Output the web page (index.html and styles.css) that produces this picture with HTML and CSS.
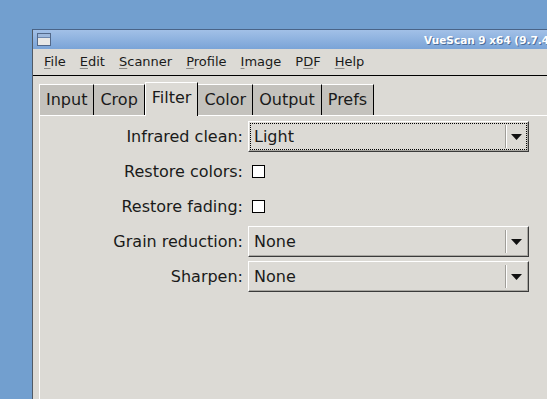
FILE: index.html
```html
<!DOCTYPE html>
<html lang="en">
<head>
<meta charset="UTF-8">
<meta name="viewport" content="width=device-width, initial-scale=1.0">
<title>VueScan</title>
<link rel="stylesheet" href="styles.css">
</head>
<body>
    <div class="window">
        <div class="titlebar">
            <svg class="win-icon" width="14" height="13" viewBox="0 0 14 13">
                <rect x="0.5" y="0.5" width="13" height="12" fill="#e8e8e6" stroke="#53698a"/>
                <rect x="1" y="1" width="12" height="3" fill="#9db8dc"/>
                <line x1="1" y1="4.5" x2="13" y2="4.5" stroke="#6d87ad"/>
            </svg>
            <span class="title">VueScan 9 x64 (9.7.48)</span>
        </div>

        <div class="menubar">
            <span class="menu-item"><u>F</u>ile</span>
            <span class="menu-item"><u>E</u>dit</span>
            <span class="menu-item"><u>S</u>canner</span>
            <span class="menu-item"><u>P</u>rofile</span>
            <span class="menu-item"><u>I</u>mage</span>
            <span class="menu-item">P<u>D</u>F</span>
            <span class="menu-item"><u>H</u>elp</span>
        </div>

        <div class="tabs">
            <div class="tab first">Input</div>
            <div class="tab">Crop</div>
            <div class="tab active">Filter</div>
            <div class="tab">Color</div>
            <div class="tab">Output</div>
            <div class="tab">Prefs</div>
        </div>

        <div class="panel">
            <div class="form">
                <div class="field-label">Infrared clean:</div>
                <div class="combo focused">
                    <div class="combo-inner">
                        <span class="combo-text">Light</span>
                        <span class="combo-sep"></span>
                        <span class="combo-arrow"><svg width="11" height="6" viewBox="0 0 11 6"><polygon points="0,0 11,0 5.5,6" fill="#111"/></svg></span>
                    </div>
                </div>

                <div class="field-label">Restore colors:</div>
                <div class="check-cell"><span class="checkbox"></span></div>

                <div class="field-label">Restore fading:</div>
                <div class="check-cell"><span class="checkbox"></span></div>

                <div class="field-label">Grain reduction:</div>
                <div class="combo">
                    <div class="combo-inner">
                        <span class="combo-text">None</span>
                        <span class="combo-sep"></span>
                        <span class="combo-arrow"><svg width="11" height="6" viewBox="0 0 11 6"><polygon points="0,0 11,0 5.5,6" fill="#111"/></svg></span>
                    </div>
                </div>

                <div class="field-label">Sharpen:</div>
                <div class="combo">
                    <div class="combo-inner">
                        <span class="combo-text">None</span>
                        <span class="combo-sep"></span>
                        <span class="combo-arrow"><svg width="11" height="6" viewBox="0 0 11 6"><polygon points="0,0 11,0 5.5,6" fill="#111"/></svg></span>
                    </div>
                </div>
            </div>
        </div>
    </div>
</body>
</html>
```

FILE: styles.css
```css
body {
    margin: 0;
    padding: 0;
    height: 399px;
    overflow: hidden;
    background-color: #729fcf;
    font-family: "DejaVu Sans", sans-serif;
    color: #1a1a1a;
}

/* window runs to the right and bottom edge of the screen */
.window {
    margin: 29px 0 0 32px;
    width: 514px;
    height: 369px;
    overflow: hidden;
    border-left: 1px solid #505a66;
    border-top: 1px solid #4a6488;
    background-color: #dcdad5;
    display: flex;
    flex-direction: column;
}

/* title bar */
.titlebar {
    height: 19px;
    display: flex;
    align-items: center;
    overflow: hidden;
    background: linear-gradient(#a2c0e7, #7aa4d7);
}

.win-icon {
    margin-left: 4px;
    flex: none;
}

.title {
    margin-left: 373px;
    font-size: 10.5px;
    font-weight: bold;
    color: #fff;
    white-space: nowrap;
    text-shadow: 1px 1px 0 #4c6d99;
}

/* menu */
.menubar {
    height: 26px;
    line-height: 26px;
    padding-left: 4px;
    display: flex;
    font-size: 13px;
    border-bottom: 1px solid #000;
}

.menu-item {
    padding: 0 7px;
}

.menu-item u {
    text-decoration-color: #8c8a86;
    text-underline-offset: 2px;
}

/* tabs */
.tabs {
    height: 39px;
    padding-left: 6px;
    display: flex;
    align-items: flex-end;
    font-size: 16px;
}

.tab {
    height: 30px;
    line-height: 30px;
    padding: 0 6px;
    background-color: #c4c2bd;
    border-top: 1px solid #fff;
    border-right: 1px solid #000;
}

.tab.first {
    border-left: 1px solid #fff;
}

.tab.active {
    position: relative; /* covers the panel's top line */
    height: 31px;
    line-height: 29px;
    padding-bottom: 2px;
    margin-bottom: -1px;
    background-color: #dcdad5;
    border-left: 1px solid #fff;
}

/* page */
.panel {
    flex: 1;
    margin-left: 6px;
    border-top: 1px solid #fff;
    border-left: 1px solid #fff;
}

.form {
    display: grid;
    grid-template-columns: 203px 281px;
    grid-auto-rows: 31px;
    column-gap: 5px;
    row-gap: 4px;
    align-items: center;
    padding-top: 5px;
    font-size: 16px;
}

.field-label {
    text-align: right;
    white-space: nowrap;
}

.check-cell {
    display: flex;
    align-items: center;
}

.checkbox {
    width: 11px;
    height: 11px;
    margin-left: 4px;
    background-color: #fff;
    border: 1px solid #000;
}

.combo {
    height: 29px;
    border: 1px solid;
    border-color: #fff #3a3a3a #3a3a3a #fff;
    box-shadow: inset -1px -1px 0 #a9a7a2;
}

.combo-inner {
    margin: 1px;
    height: 25px;
    border: 1px dotted transparent;
    display: flex;
    align-items: center;
}

.combo.focused .combo-inner {
    border-color: #000;
}

.combo-text {
    flex: 1;
    padding-left: 3px;
    line-height: 25px;
}

.combo-sep {
    width: 1px;
    height: 23px;
    background-color: #a09e99;
    border-right: 1px solid #fff;
}

.combo-arrow {
    width: 19px;
    display: flex;
    justify-content: center;
    align-items: center;
    padding-top: 1px;
}
```
